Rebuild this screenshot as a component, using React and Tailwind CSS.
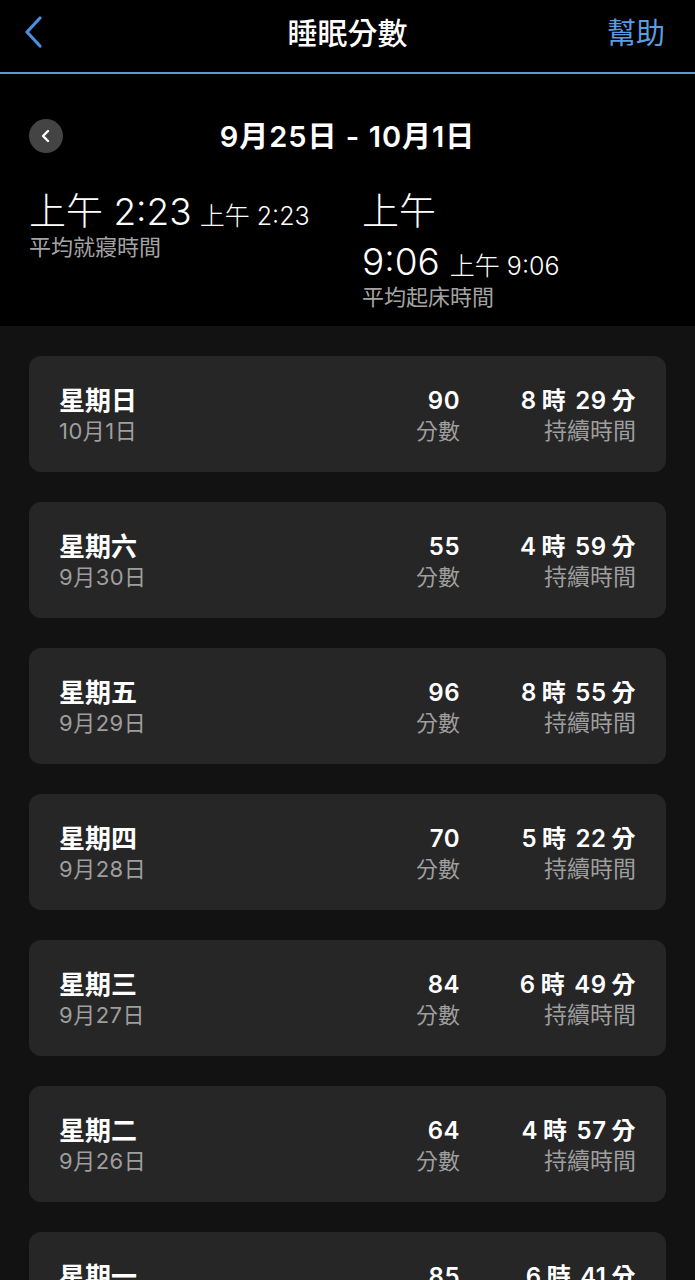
import React from "react";

const font = { fontFamily: 'Inter, "Noto Sans CJK TC", "Noto Sans", sans-serif' };

const rows = [
  ["星期日", "10月1日", "90", "8", "29"],
  ["星期六", "9月30日", "55", "4", "59"],
  ["星期五", "9月29日", "96", "8", "55"],
  ["星期四", "9月28日", "70", "5", "22"],
  ["星期三", "9月27日", "84", "6", "49"],
  ["星期二", "9月26日", "64", "4", "57"],
  ["星期一", "9月25日", "85", "6", "41"],
];

export default function App() {
  return (
    <div className="min-h-screen w-[695px] bg-[#121212] text-white" style={font}>
      {/* header */}
      <div className="relative flex h-[74px] items-center justify-center border-b-2 border-[#5b9ad8] bg-black pb-[6px]">
        <svg className="absolute left-[22px] top-[15px]" width="22" height="34" viewBox="0 0 22 34">
          <path d="M18 3 L5 17 L18 31" fill="none" stroke="#4a90e2" strokeWidth="3.2" strokeLinecap="round" strokeLinejoin="round" />
        </svg>
        <div className="text-[30px] font-medium leading-none">睡眠分數</div>
        <div className="absolute right-[30px] top-[19px] text-[29px] leading-none text-[#5a9de0]">幫助</div>
      </div>

      {/* summary */}
      <div className="bg-black px-[29px] pb-[17px] pt-[45px]">
        <div className="relative flex h-[34px] items-center justify-center">
          <div className="absolute left-0 top-0 flex h-[34px] w-[34px] items-center justify-center rounded-full bg-[#444444]">
            <svg width="12" height="14" viewBox="0 0 12 14">
              <path d="M8 2 L3 7 L8 12" fill="none" stroke="white" strokeWidth="2.4" strokeLinecap="round" strokeLinejoin="round" />
            </svg>
          </div>
          <div className="text-[29px] font-semibold leading-none tracking-[1px]">9月25日 - 10月1日</div>
        </div>
        <div className="mt-[34px] flex">
          <div className="w-[333px]">
            <div className="text-[37px] font-light leading-[50px]">
              上午 2:23<span className="ml-[8px] text-[25px]">上午 2:23</span>
            </div>
            <div className="-mt-[6px] text-[22px] leading-[24px] text-[#a3a3a3]">平均就寢時間</div>
          </div>
          <div>
            <div className="text-[37px] font-light leading-[50px]">上午</div>
            <div className="text-[37px] font-light leading-[50px]">
              9:06<span className="ml-[10px] text-[25px]">上午 9:06</span>
            </div>
            <div className="-mt-[6px] text-[22px] leading-[24px] text-[#a3a3a3]">平均起床時間</div>
          </div>
        </div>
      </div>

      {/* list */}
      <div className="flex flex-col gap-[30px] px-[29px] pt-[30px] pb-[30px]">
        {rows.map(([day, date, score, h, m]) => (
          <div key={day} className="flex h-[116px] items-center rounded-[12px] bg-[#262626] px-[30px] pt-[4px]">
            <div className="flex-1">
              <div className="text-[26px] font-semibold leading-[30px]">{day}</div>
              <div className="text-[22px] leading-[30px] tracking-[0.5px] text-[#9e9e9e]">{date}</div>
            </div>
            <div className="text-right">
              <div className="text-[24px] font-semibold leading-[30px] tracking-[0.5px]">{score}</div>
              <div className="text-[22px] leading-[30px] text-[#9e9e9e]">分數</div>
            </div>
            <div className="w-[176px] text-right">
              <div className="text-[24px] font-semibold leading-[30px] tracking-[0.5px]">
                {h}<span className="ml-[5px]">時</span><span className="ml-[9px]">{m}</span><span className="ml-[5px]">分</span>
              </div>
              <div className="text-[23px] leading-[30px] text-[#9e9e9e]">持續時間</div>
            </div>
          </div>
        ))}
      </div>
    </div>
  );
}
